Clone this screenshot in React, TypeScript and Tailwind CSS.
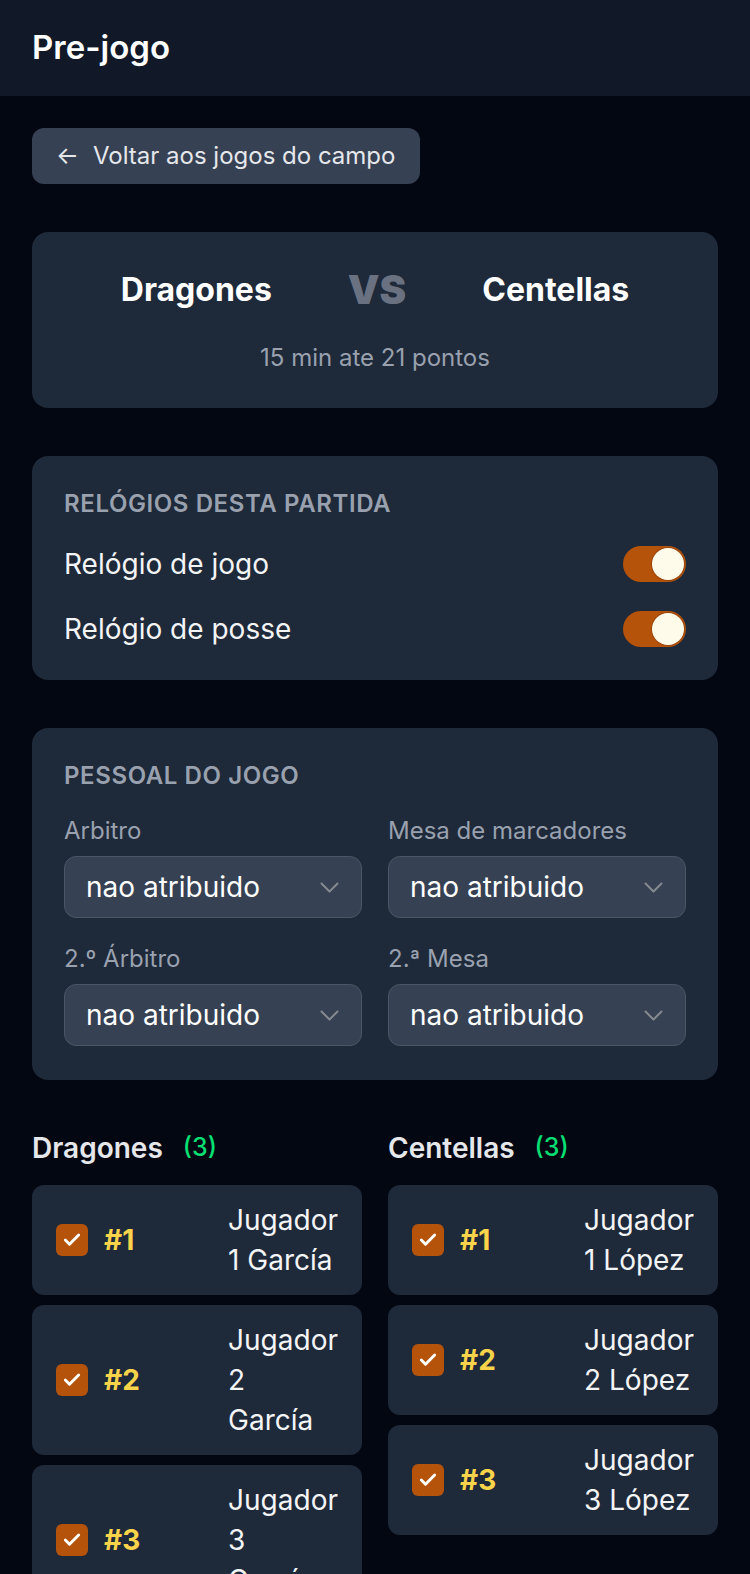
import { Check } from 'lucide-react';

type Player = { num: number; lines: string[] };

const dragones: Player[] = [
  { num: 1, lines: ['Jugador', '1 García'] },
  { num: 2, lines: ['Jugador', '2', 'García'] },
  { num: 3, lines: ['Jugador', '3', 'García'] },
];

const centellas: Player[] = [
  { num: 1, lines: ['Jugador', '1 López'] },
  { num: 2, lines: ['Jugador', '2 López'] },
  { num: 3, lines: ['Jugador', '3 López'] },
];

function Toggle() {
  return (
    <div className="flex h-[36px] w-[63px] items-center justify-end rounded-full bg-[#b45309] p-[2px]">
      <div className="h-[32px] w-[32px] rounded-full bg-[#fffbeb] shadow-[0_0_0_1px_rgba(120,53,15,0.4)]" />
    </div>
  );
}

function Chevron() {
  return (
    <svg width="19" height="11" viewBox="0 0 19 11" fill="none" className="shrink-0">
      <path d="M1.5 1.5 9.5 9.5 17.5 1.5" stroke="#858a90" strokeWidth="2" strokeLinecap="round" strokeLinejoin="round" />
    </svg>
  );
}

function SelectField({ label }: { label: string }) {
  return (
    <div className="flex flex-col">
      <span className="text-[24px] leading-7 text-gray-400">{label}</span>
      <div className="mt-[11px] flex h-[62px] items-center justify-between rounded-xl border border-gray-600 bg-gray-700 pl-[21px] pr-[22px]">
        <span className="text-[28px] text-white">nao atribuido</span>
        <Chevron />
      </div>
    </div>
  );
}

function PlayerCard({ p }: { p: Player }) {
  return (
    <div className="flex items-center rounded-xl bg-gray-800 px-6 py-[15px]">
      <div className="flex h-8 w-8 shrink-0 items-center justify-center rounded-md bg-[#b45309]">
        <Check size={20} strokeWidth={3.5} className="text-white" />
      </div>
      <span className="ml-4 text-[28px] font-bold text-[#f9d44a]">#{p.num}</span>
      <div className="ml-auto text-[28px] leading-10 text-gray-100">
        {p.lines.map((l, i) => (
          <div key={i} className="whitespace-nowrap">{l}</div>
        ))}
      </div>
    </div>
  );
}

function TeamColumn({ name, players }: { name: string; players: Player[] }) {
  return (
    <div className="flex flex-col">
      <div className="flex h-10 items-center gap-5">
        <span className="text-[28px] font-semibold text-gray-200">{name}</span>
        <span className="text-[25px] font-medium text-green-400">({players.length})</span>
      </div>
      <div className="mt-[17px] flex flex-col gap-[10px]">
        {players.map((p) => (
          <PlayerCard key={p.num} p={p} />
        ))}
      </div>
    </div>
  );
}

export default function App() {
  return (
    <div className="min-h-screen bg-[#030712] font-['Inter','Noto_Sans',sans-serif] text-white">
      <header className="flex h-24 items-center bg-[#111827] px-8">
        <h1 className="text-[33px] font-semibold text-white">Pre-jogo</h1>
      </header>

      <main className="flex flex-col gap-12 p-8">
        <button className="flex h-[56px] items-center gap-[14px] self-start rounded-xl bg-gray-700 pl-6 pr-[25px] text-[24px] text-gray-200">
          <span>←</span>
          <span>Voltar aos jogos do campo</span>
        </button>

        {/* match summary */}
        <section className="flex flex-col items-center rounded-2xl bg-gray-800 pb-[34px] pt-10">
          <div className="flex h-9 items-center justify-center gap-[76px]">
            <span className="text-[32px] font-bold leading-9">Dragones</span>
            <span className="text-[40px] font-black leading-9 text-gray-500">VS</span>
            <span className="text-[32px] font-bold leading-9">Centellas</span>
          </div>
          <p className="mt-[34px] text-[24px] leading-8 text-gray-400">15 min ate 21 pontos</p>
        </section>

        {/* clocks */}
        <section className="rounded-2xl bg-gray-800 px-8 pb-[33px] pt-8">
          <h2 className="text-[24px] font-semibold uppercase leading-8 tracking-wide text-gray-400">Relógios desta partida</h2>
          <div className="mt-[26px] flex flex-col gap-[29px]">
            <div className="flex h-9 items-center justify-between">
              <span className="text-[28px] text-gray-100">Relógio de jogo</span>
              <Toggle />
            </div>
            <div className="flex h-9 items-center justify-between">
              <span className="text-[28px] text-gray-100">Relógio de posse</span>
              <Toggle />
            </div>
          </div>
        </section>

        {/* staff */}
        <section className="rounded-2xl bg-gray-800 px-8 pb-[34px] pt-8">
          <h2 className="text-[24px] font-semibold uppercase leading-8 tracking-wide text-gray-400">Pessoal do jogo</h2>
          <div className="mt-[25px] grid grid-cols-2 gap-x-[26px] gap-y-[27px]">
            <SelectField label="Arbitro" />
            <SelectField label="Mesa de marcadores" />
            <SelectField label="2.º Árbitro" />
            <SelectField label="2.ª Mesa" />
          </div>
        </section>

        {/* rosters */}
        <section className="grid grid-cols-2 gap-x-[26px]">
          <TeamColumn name="Dragones" players={dragones} />
          <TeamColumn name="Centellas" players={centellas} />
        </section>
      </main>
    </div>
  );
}
